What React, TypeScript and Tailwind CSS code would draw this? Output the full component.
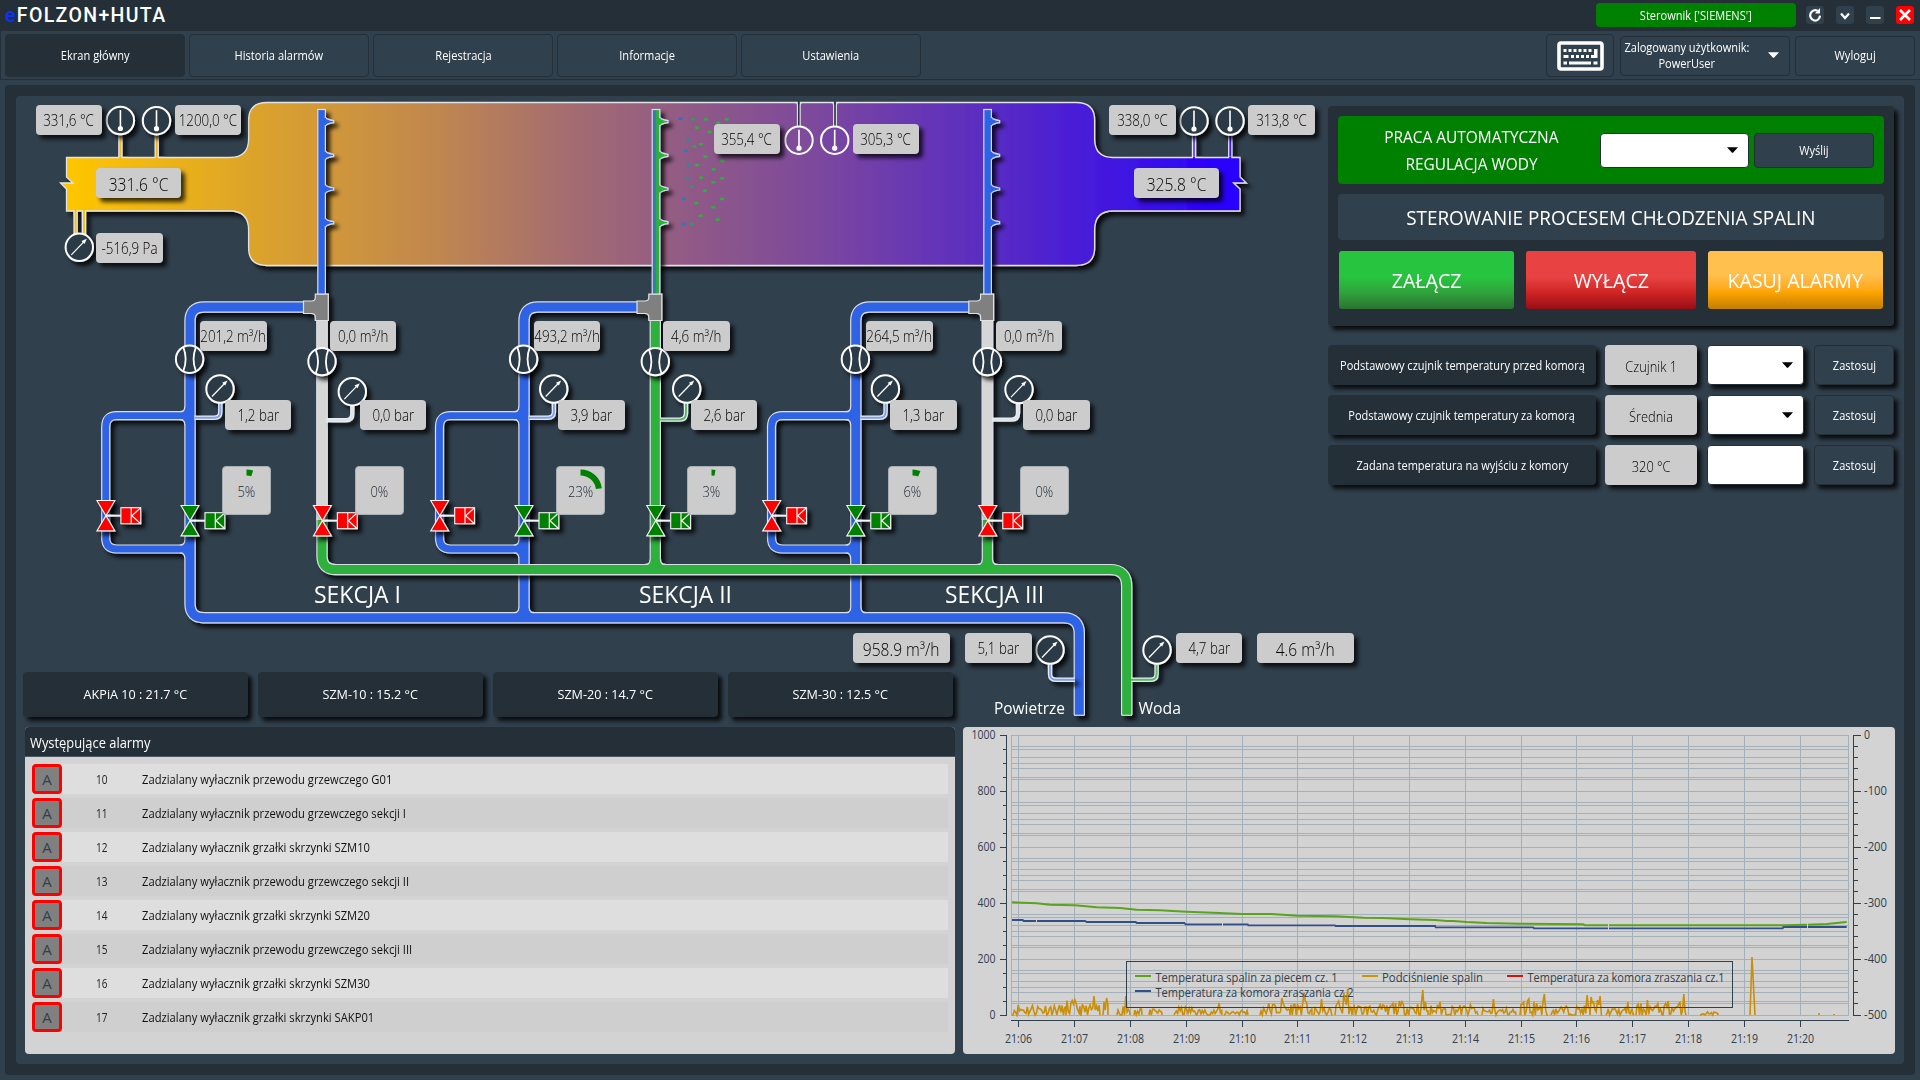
import React from "react";

const BLUE = "#2f64e6";
const GREEN = "#2db03d";
const GRAY = "#d6d6d6";

type Pt = [number, number];

/* ---------- small building blocks ---------- */

function T({ children, className = "" }: { children: React.ReactNode; className?: string }) {
  return <span className={"inline-block whitespace-nowrap " + className}>{children}</span>;
}

function Caret({ className = "" }: { className?: string }) {
  return (
    <svg width="11" height="6" viewBox="0 0 11 6" className={className}>
      <path d="M0 0.3H11L6 5.8H5Z" fill="currentColor" />
    </svg>
  );
}

function NavButton({ label, active }: { label: string; active?: boolean }) {
  return (
    <button
      className={
        "flex h-[43px] w-[180px] items-center justify-center rounded border border-[#242f38] pt-px text-[12px] text-white " +
        (active ? "bg-[#242f38]" : "")
      }
    >
      <T className="scale-x-[.925]">{label}</T>
    </button>
  );
}

/* ---------- process diagram ---------- */

type PillData = { x: number; y: number; w: number; t: string; big?: boolean };

const pills: PillData[] = [
  { x: 36, y: 105, w: 66, t: "331,6 °C" },
  { x: 175, y: 105, w: 66, t: "1200,0 °C" },
  { x: 96, y: 168, w: 85, t: "331.6 °C", big: true },
  { x: 96, y: 233, w: 67, t: "-516,9 Pa" },
  { x: 200, y: 321, w: 67, t: "201,2 m³/h" },
  { x: 330, y: 321, w: 66, t: "0,0 m³/h" },
  { x: 714, y: 124, w: 66, t: "355,4 °C" },
  { x: 853, y: 124, w: 66, t: "305,3 °C" },
  { x: 1109, y: 105, w: 67, t: "338,0 °C" },
  { x: 1248, y: 105, w: 67, t: "313,8 °C" },
  { x: 1134, y: 168, w: 85, t: "325.8 °C", big: true },
  { x: 534, y: 321, w: 66, t: "493,2 m³/h" },
  { x: 663, y: 321, w: 67, t: "4,6 m³/h" },
  { x: 866, y: 321, w: 67, t: "264,5 m³/h" },
  { x: 996, y: 321, w: 66, t: "0,0 m³/h" },
  { x: 225, y: 400, w: 66, t: "1,2 bar" },
  { x: 360, y: 400, w: 66, t: "0,0 bar" },
  { x: 558, y: 400, w: 67, t: "3,9 bar" },
  { x: 691, y: 400, w: 66, t: "2,6 bar" },
  { x: 890, y: 400, w: 67, t: "1,3 bar" },
  { x: 1023, y: 400, w: 67, t: "0,0 bar" },
  { x: 853, y: 633, w: 97, t: "958.9 m³/h", big: true },
  { x: 965, y: 633, w: 67, t: "5,1 bar" },
  { x: 1176, y: 633, w: 66, t: "4,7 bar" },
  { x: 1257, y: 633, w: 97, t: "4.6 m³/h", big: true },
];

const dials = [
  { x: 222, v: 5 },
  { x: 355, v: 0 },
  { x: 556, v: 23 },
  { x: 687, v: 3 },
  { x: 888, v: 6 },
  { x: 1020, v: 0 },
];

function Pill({ x, y, w, t, big }: PillData) {
  return (
    <div
      className="absolute flex h-[30px] items-center justify-center overflow-hidden rounded bg-[#cccccc] pt-[2px] shadow-[4px_4px_4px_rgba(0,0,0,0.75)]"
      style={{ left: x - 16, top: y - 96, width: w }}
    >
      <T
        className={
          big
            ? "scale-x-[.89] text-[17.5px] font-[350] text-black"
            : "scale-x-[.86] text-[15.5px] font-[350] text-black"
        }
      >
        {t}
      </T>
    </div>
  );
}

function Dial({ x, v }: { x: number; v: number }) {
  const a = (v / 100) * Math.PI * 2;
  const r = 18.5;
  return (
    <div
      className="absolute flex h-[49px] w-[49px] items-center justify-center rounded border border-[#a9b0b5] bg-[#cccccc] pt-px"
      style={{ left: x - 16, top: 466 - 96 }}
    >
      <svg className="absolute inset-0" width="47" height="47" viewBox="0 0 47 47">
        {v > 0 && (
          <path
            d={`M23.5 ${24 - r}A${r} ${r} 0 0 1 ${23.5 + r * Math.sin(a)} ${24 - r * Math.cos(a)}`}
            stroke="#008000"
            strokeWidth="6"
            fill="none"
          />
        )}
      </svg>
      <T className="relative scale-x-[.86] text-[15px] font-[350] text-[#1d2a36]">{v}%</T>
    </div>
  );
}

function Pipe({ d, c, w = 9 }: { d: string; c: string; w?: number }) {
  return <path d={d} stroke={c} strokeWidth={w} fill="none" />;
}

type PipeDef = { d: string; c: string; w: number };

function PipeSet({ list }: { list: PipeDef[] }) {
  return (
    <>
      {list.map((p, i) => (
        <Pipe key={"o" + i} d={p.d} c="#d9dde6" w={p.w + 2.4} />
      ))}
      {list.map((p, i) => (
        <Pipe key={"i" + i} d={p.d} c={p.c} w={p.w} />
      ))}
    </>
  );
}

function Stem({ d, c }: { d: string; c: string }) {
  return (
    <g fill="none">
      <path d={d} stroke="#e8ecf4" strokeWidth="4.4" />
      <path d={d} stroke={c} strokeWidth="1.9" />
    </g>
  );
}

function Ring({ x, y, fill = "#2c3a46" }: { x: number; y: number; fill?: string }) {
  return <circle cx={x} cy={y} r="13.7" fill={fill} stroke="#fff" strokeWidth="2" />;
}

function Thermo({ x, y, fill }: { x: number; y: number; fill?: string }) {
  return (
    <g>
      <Ring x={x} y={y} fill={fill} />
      <path d={`M${x} ${y - 10.5}V${y + 8}`} stroke="#fff" strokeWidth="1.6" />
      <circle cx={x} cy={y + 8} r="2.6" fill="#fff" />
    </g>
  );
}

function Gauge({ x, y }: { x: number; y: number }) {
  return (
    <g>
      <Ring x={x} y={y} />
      <path d={`M${x - 8} ${y + 7.5}L${x + 5} ${y - 6}`} stroke="#fff" strokeWidth="1.2" />
      <path d={`M${x + 7.5} ${y - 8.5}L${x + 5.2} ${y - 3.4}L${x + 2.2} ${y - 6.2}Z`} fill="#fff" />
    </g>
  );
}

function Flow({ x, y }: { x: number; y: number }) {
  return (
    <g>
      <Ring x={x} y={y} />
      <path
        d={`M${x - 6.3} ${y - 12}Q${x - 1.6} ${y} ${x - 6.3} ${y + 12}M${x + 6.3} ${y - 12}Q${x + 1.6} ${y} ${x + 6.3} ${y + 12}`}
        stroke="#fff"
        strokeWidth="1.8"
        fill="none"
      />
    </g>
  );
}

function Valve({ x, y, c }: { x: number; y: number; c: string }) {
  return (
    <g transform={`translate(${x} ${y})`} stroke="#f4f4f4">
      <path d="M0 0H15" strokeWidth="2" />
      <path d="M-9 -15.2H9L0 0ZM-9 15.2H9L0 0Z" fill={c} strokeWidth="1.1" />
      <rect x="15" y="-8" width="19.8" height="16" fill={c} strokeWidth="1.1" />
      <path d="M25.3 -8V8M34.8 -8L26 0L34.8 8" fill="none" strokeWidth="1.2" />
    </g>
  );
}

function Tee({ x }: { x: number }) {
  return (
    <path
      transform={`translate(${x} 0)`}
      d="M0 294.2H13V320.5H0V317Q0 313.5 -4 313.5H-11.8V301H-4Q0 301 0 297.5Z"
      fill="#808080"
      stroke="#e2e2e2"
      strokeWidth="1.2"
    />
  );
}

function Lance({ x, fill, tip }: { x: number; fill: string; tip: string }) {
  return (
    <g>
      <rect x={x - 3.8} y="109.5" width="7.6" height="185" fill={fill} stroke="#d5dcf0" strokeWidth="1.2" />
      {[121.6, 155.3, 189, 222.7].map((y) => (
        <g key={y}>
          <path d={`M${x + 3.8} ${y - 4.2}Q${x + 5} ${y - 2} ${x + 12} ${y - 1}V${y + 1}Q${x + 5} ${y + 2} ${x + 3.8} ${y + 4.2}`} fill={tip} stroke="#d5dcf0" strokeWidth="1.2" />
          <rect x={x + 2} y={y - 3.4} width="2.6" height="6.8" fill={tip} />
        </g>
      ))}
    </g>
  );
}

const drops: [number, number, string][] = [
  [722, 86, "#2f6fd0"], [759, 88, "#2d9a68"], [797, 88, GREEN], [860, 88, GREEN], [835, 99, GREEN],
  [771, 113, GREEN], [809, 126, GREEN], [745, 150, "#2d86a0"], [783, 163, GREEN], [763, 170, "#2da258"],
  [737, 183, "#2f7cb4"], [796, 200, GREEN], [847, 213, GREEN], [746, 225, "#2d8a90"], [771, 225, GREEN],
  [821, 238, GREEN], [783, 263, GREEN], [743, 265, "#2d8a98"], [846, 265, GREEN], [820, 277, GREEN],
  [756, 290, "#2d9a68"], [795, 302, GREEN], [731, 327, "#2f78c0"], [846, 327, GREEN], [769, 340, GREEN],
  [820, 352, GREEN], [782, 377, GREEN], [833, 389, GREEN], [731, 402, "#2f78c0"], [756, 402, "#2d9a68"],
];

const sections = [
  { air: 190, by: 105.7, water: 322, tee: 315.3, lance: 321.6, on: false },
  { air: 524, by: 439.5, water: 655.3, tee: 648.8, lance: 656, on: true },
  { air: 855.8, by: 771.5, water: 987.4, tee: 980.6, lance: 987.6, on: false },
];

const airPipes: PipeDef[] = [
  ...sections.flatMap((s, i) => [
    {
      d: `M${s.tee - 11} 307H${s.air + 14}Q${s.air} 307 ${s.air} 321V${i === 0 ? "603.7Q190 617.7 204 617.7" : "617"}`,
      c: BLUE,
      w: 9,
    },
    {
      d: `M${s.air} 415.7H${s.by + 11}Q${s.by} 415.7 ${s.by} 426.7V538Q${s.by} 549 ${s.by + 11} 549H${s.air}`,
      c: BLUE,
      w: 6.8,
    },
  ]),
  { d: "M203 617.7H1063.3Q1079.3 617.7 1079.3 633.7V715", c: BLUE, w: 9 },
];

const waterPipes: PipeDef[] = [
  { d: "M322 520V556Q322 569.6 336 569.6H1110Q1126.7 569.6 1126.7 586V715", c: GREEN, w: 9 },
  { d: "M655.3 318V569", c: GREEN, w: 9 },
  { d: "M987.4 520V569", c: GREEN, w: 9 },
];

const dryPipes: PipeDef[] = [
  { d: "M322 318V520", c: GRAY, w: 9.4 },
  { d: "M987.4 318V520", c: GRAY, w: 9.4 },
];

/* Rounded inner corner where two pipes meet; sx, sy give the quadrant. */
function Fillet({ x, y, sx, sy, c }: { x: number; y: number; sx: number; sy: number; c: string }) {
  return (
    <g transform={`translate(${x} ${y}) scale(${sx} ${sy})`}>
      <path d="M-2 -2H5Q0 0 0 5H-2Z" fill={c} />
      <path d="M5 0Q0 0 0 5" fill="none" stroke="#d9dde6" strokeWidth="1.2" transform="translate(.2 .2)" />
    </g>
  );
}

function Diagram() {
  return (
    <svg
      className="pointer-events-none absolute top-0 left-0 overflow-visible"
      width="1304"
      height="630"
      viewBox="16 96 1304 630"
    >
      <defs>
        <linearGradient id="heat" gradientUnits="userSpaceOnUse" x1="66" x2="1240" y1="0" y2="0">
          <stop offset="0" stopColor="#ffc600" />
          <stop offset="0.155" stopColor="#dda42a" />
          <stop offset="0.32" stopColor="#bf8650" />
          <stop offset="0.42" stopColor="#a66e6e" />
          <stop offset="0.5" stopColor="#965f80" />
          <stop offset="0.62" stopColor="#804c98" />
          <stop offset="0.71" stopColor="#6b3ab0" />
          <stop offset="0.8" stopColor="#5629c6" />
          <stop offset="0.9" stopColor="#4015e2" />
          <stop offset="0.98" stopColor="#2a00ff" />
        </linearGradient>
        <linearGradient id="mix" x1="0" x2="1" y1="0" y2="0">
          <stop offset="0" stopColor="#3f6fc4" />
          <stop offset="0.42" stopColor="#3a7f98" />
          <stop offset="0.6" stopColor={GREEN} />
          <stop offset="1" stopColor={GREEN} />
        </linearGradient>
        <filter id="sh" x="-20%" y="-20%" width="140%" height="140%">
          <feDropShadow dx="4" dy="4" stdDeviation="2" floodColor="#000" floodOpacity="0.8" />
        </filter>
      </defs>

      <g filter="url(#sh)">
        <Stem d="M120.4 134V159" c="#f5b912" />
        <Stem d="M156.7 134V159" c="#f0b418" />
        <Stem d="M75.6 209V236" c="#fcc006" />
        <Stem d="M84 209V236" c="#fcc006" />
        <Stem d="M1194 134V159" c="#6a48ff" />
        <Stem d="M1230.3 134V159" c="#3a12ff" />
        <path
          d="M66.5 157.5H230Q248.6 157.5 248.6 139V120Q248.6 102.5 267 102.5H1076Q1094.6 102.5 1094.6 120V139Q1094.6 157.5 1113 157.5H1240V177L1246.4 183H1233.5L1240 189V211H1113Q1094.6 211 1094.6 230V248Q1094.6 265.5 1076 265.5H267Q248.6 265.5 248.6 248V230Q248.6 211 230 211H66.5V189L60.5 183H73L66.5 177Z"
          fill="url(#heat)"
          stroke="#e3e3e3"
          strokeWidth="1.3"
        />
        <path d="M119.3 158H121.5M155.6 158H157.8" stroke="#f3b715" strokeWidth="2" />
        <path d="M74.7 211H76.5M83.1 211H84.9" stroke="#fcc006" strokeWidth="2" />
        <path d="M1193 158H1195M1229.3 158H1231.3" stroke="#3608f2" strokeWidth="2" />
      </g>

      {[798.8, 835].map((x) => (
        <g key={x} fill="none">
          <path d={`M${x} 101V127`} stroke="#2a3742" strokeWidth="1.8" />
          <path d={`M${x - 4} 102.5Q${x - 1.4} 102.5 ${x - 1.4} 105V127M${x + 4} 102.5Q${x + 1.4} 102.5 ${x + 1.4} 105V127`} stroke="#e3e3e3" strokeWidth="1.1" />
        </g>
      ))}

      {drops.map(([x, y, c], i) => (
        <ellipse key={i} cx={440 + x / 3} cy={90 + y / 3} rx="2.3" ry="1.4" fill={c} />
      ))}

      <g filter="url(#sh)">
        <PipeSet list={airPipes} />
        {sections.map((s) => (
          <g key={s.air}>
            <Fillet x={s.air - 5} y={411.9} sx={-1} sy={-1} c={BLUE} />
            <Fillet x={s.air - 5} y={419.5} sx={-1} sy={1} c={BLUE} />
            <Fillet x={s.air - 5} y={545.2} sx={-1} sy={-1} c={BLUE} />
            <Fillet x={s.air - 5} y={552.8} sx={-1} sy={1} c={BLUE} />
          </g>
        ))}
        {sections.slice(1).map((s) => (
          <g key={s.air}>
            <Fillet x={s.air - 5} y={612.8} sx={-1} sy={-1} c={BLUE} />
            <Fillet x={s.air + 5} y={612.8} sx={1} sy={-1} c={BLUE} />
          </g>
        ))}
        <path d="M1074 715.3H1084.6" stroke="#dcdcdc" strokeWidth="1.2" />
      </g>

      <g filter="url(#sh)">
        {sections.map((s, i) => (
          <Lance key={s.lance} x={s.lance} fill={i === 1 ? "url(#mix)" : BLUE} tip={i === 1 ? GREEN : BLUE} />
        ))}
        <PipeSet list={dryPipes} />
        <PipeSet list={waterPipes} />
        {[655.3, 987.4].map((x) => (
          <g key={x}>
            <Fillet x={x - 5} y={564.6} sx={-1} sy={-1} c={GREEN} />
            <Fillet x={x + 5} y={564.6} sx={1} sy={-1} c={GREEN} />
          </g>
        ))}
        <path d="M1121.4 715.3H1132" stroke="#dcdcdc" strokeWidth="1.2" />
        {sections.map((s) => (
          <Tee key={s.tee} x={s.tee} />
        ))}
      </g>

      <g filter="url(#sh)">
        <Stem d="M220.3 402V412Q220.3 417.8 214 417.8H194.5" c="#7f9ff2" />
        <Stem d="M553.9 402V412Q553.9 417.8 547.5 417.8H528.5" c="#7f9ff2" />
        <Stem d="M885.6 402V412Q885.6 417.8 879.3 417.8H860.3" c="#7f9ff2" />
        <Stem d="M352.3 404V414Q352.3 420.3 346 420.3H326.5" c="#e2e2e2" />
        <Stem d="M686 402V413Q686 419.6 679.6 419.6H660" c="#58b864" />
        <Stem d="M1018 402V413Q1018 419.6 1011.7 419.6H992" c="#e2e2e2" />
        <Stem d="M1050 663V674Q1050 679.8 1056 679.8H1075" c="#7f9ff2" />
        <Stem d="M1156.6 663V674Q1156.6 679.8 1150.6 679.8H1131" c="#58b864" />

        {sections.map((s) => (
          <g key={s.air}>
            <Flow x={s.air - 0.4} y={359.2} />
            <Flow x={s.water} y={361.6} />
            <Valve x={s.by + 0.2} y={515.7} c="#ff0000" />
            <Valve x={s.air} y={520.7} c="#008000" />
            <Valve x={s.water + 0.4} y={520.7} c={s.on ? "#008000" : "#ff0000"} />
          </g>
        ))}
        <Thermo x={120.4} y={120.5} />
        <Thermo x={156.5} y={120.7} />
        <Thermo x={1194} y={121} />
        <Thermo x={1230} y={121} />
        <Gauge x={79.3} y={247.3} />
        <Gauge x={220} y={389} />
        <Gauge x={352.3} y={391.7} />
        <Gauge x={553.7} y={389} />
        <Gauge x={686.7} y={389} />
        <Gauge x={885.4} y={389} />
        <Gauge x={1019} y={389.6} />
        <Gauge x={1050} y={650} />
        <Gauge x={1157} y={650} />
      </g>
      <Thermo x={799} y={140.2} fill="#7f4c9a" />
      <Thermo x={834.7} y={140.2} fill="#7644a2" />

      <g fill="#fff" fontSize="23.5">
        <text x="314" y="603" textLength="87" lengthAdjust="spacingAndGlyphs">SEKCJA I</text>
        <text x="639" y="603" textLength="93" lengthAdjust="spacingAndGlyphs">SEKCJA II</text>
        <text x="945" y="603" textLength="99" lengthAdjust="spacingAndGlyphs">SEKCJA III</text>
      </g>
      <g fill="#fff" fontSize="16.5">
        <text x="994" y="714" textLength="71" lengthAdjust="spacingAndGlyphs">Powietrze</text>
        <text x="1138.5" y="714" textLength="42.5" lengthAdjust="spacingAndGlyphs">Woda</text>
      </g>
    </svg>
  );
}

/* ---------- trend chart ---------- */

const L = (pts: Pt[], ox: number): Pt[] => pts.map(([x, y]) => [ox + x / 3, 715 + y / 3]);
const toPath = (pts: Pt[]) => "M" + pts.map(([x, y]) => `${x.toFixed(1)} ${y.toFixed(1)}`).join("L");

const greenLine = toPath([
  ...L([[186, 562], [260, 565], [300, 569], [375, 571], [440, 577], [510, 579], [560, 584], [630, 586], [709, 590], [790, 593], [877, 597], [965, 597], [1042, 602], [1155, 604], [1240, 608], [1300, 609], [1380, 613], [1455, 615], [1490, 618]], 950),
  ...L([[100, 618], [140, 621], [200, 624], [300, 626], [490, 628], [495, 631], [1090, 631], [1160, 629], [1220, 627], [1280, 621]], 1420),
]);
const blueLine = toPath([
  ...L([[186, 615], [218, 615], [221, 618], [405, 618], [410, 621], [557, 621], [560, 624], [703, 624], [707, 628], [893, 628], [895, 631], [1155, 631], [1157, 633], [1455, 633]], 950),
  ...L([[45, 634], [47, 637], [340, 637], [342, 640], [1088, 640], [1090, 636], [1280, 636]], 1420),
]);

/* Draught bursts: x range and typical height above the zero line. */
const bursts: { from: number; to: number; h: number }[] = [
  { from: 1012, to: 1052, h: 10 }, { from: 1052, to: 1066, h: 9 }, { from: 1066, to: 1080, h: 13 },
  { from: 1080, to: 1100, h: 9 }, { from: 1103, to: 1108, h: 11 }, { from: 1117, to: 1130, h: 9 },
  { from: 1134, to: 1142, h: 10 }, { from: 1149, to: 1162, h: 5 }, { from: 1174, to: 1196, h: 7 },
  { from: 1196, to: 1222, h: 5 }, { from: 1224, to: 1248, h: 5 }, { from: 1260, to: 1290, h: 11 },
  { from: 1290, to: 1312, h: 12 }, { from: 1314, to: 1332, h: 6 }, { from: 1335, to: 1352, h: 14 },
  { from: 1352, to: 1388, h: 9 }, { from: 1388, to: 1428, h: 12 }, { from: 1430, to: 1446, h: 9 },
  { from: 1446, to: 1478, h: 9 }, { from: 1482, to: 1516, h: 6 }, { from: 1520, to: 1548, h: 13 },
  { from: 1551, to: 1590, h: 8 }, { from: 1590, to: 1602, h: 14 }, { from: 1606, to: 1634, h: 6 },
  { from: 1636, to: 1662, h: 10 }, { from: 1662, to: 1686, h: 11 }, { from: 1700, to: 1718, h: 3 },
];
const peaks: Record<number, number> = {
  1094: 19, 1107: 17, 1126: 19, 1219: 12, 1282: 17, 1304: 22, 1322: 16, 1344: 22, 1348: 26, 1423: 25, 1440: 13,
  1493: 16, 1529: 16, 1544: 21, 1587: 20, 1591: 18, 1600: 19, 1628: 13, 1647: 15, 1668: 14, 1684: 21,
};

function draught(): string {
  let seed = 11;
  const rnd = () => {
    seed = (seed * 16807) % 2147483647;
    return seed / 2147483647;
  };
  let d = "";
  for (const b of bursts) {
    d += `M${b.from} 1015`;
    for (let x = b.from + 1; x < b.to; x += 1.3) {
      const near = Object.keys(peaks).find((k) => Math.abs(Number(k) - x) < 0.7);
      const h = near ? peaks[Number(near)] : Math.max(0, b.h * (rnd() * 1.3 - 0.12));
      d += `L${x.toFixed(1)} ${(1015 - h).toFixed(1)}`;
    }
    d += `L${b.to} 1015`;
  }
  d += "M1750 1015L1752 957L1755 1015M1819 1015V1013M1834 1015V1014";
  return d;
}

const vGrid = [1018.5, 1074.5, 1130.5, 1186.5, 1242.5, 1297.5, 1353.5, 1409.5, 1465.5, 1521.5, 1576.5, 1632.5, 1688.5, 1744.5, 1800.5];
const minorL = [14, 28, 42];
const minorR = [11, 22, 33, 44];

function Chart() {
  const rows = [0, 1, 2, 3, 4];
  return (
    <div className="h-[327px] w-[932px] rounded bg-[#d3d3d3]">
      <svg width="932" height="327" viewBox="963 727 932 327" className="block">
        <g stroke="#a5b1ba" strokeWidth="1" fill="none" shapeRendering="crispEdges">
          <rect x="1011.5" y="735.5" width="837" height="280" />
          {vGrid.map((x) => (
            <path key={x} d={`M${x} 735V1015`} />
          ))}
          {rows.map((r) => (
            <g key={r}>
              <path d={`M1012 ${735.5 + r * 56}H1848`} />
              {[...minorL, ...minorR].map((m) => (
                <path key={m} d={`M1012 ${735.5 + r * 56 + m}H1848`} />
              ))}
            </g>
          ))}
        </g>
        <g stroke="#31404d" strokeWidth="1" fill="none" shapeRendering="crispEdges">
          <path d="M1000 735.5H1006.5V1015.5H1000M1861 735.5H1853.5V1015.5H1861M1011 1020.5H1849" />
          {rows.map((r) => (
            <g key={r}>
              <path d={`M1000 ${735.5 + r * 56}H1006M1854 ${735.5 + r * 56}H1861`} />
              {minorL.map((m) => (
                <path key={m} d={`M1003 ${735.5 + r * 56 + m}H1006`} />
              ))}
              {minorR.map((m) => (
                <path key={m} d={`M1854 ${735.5 + r * 56 + m}H1858`} />
              ))}
            </g>
          ))}
          {vGrid.map((x) => (
            <path key={x} d={`M${x} 1020V1027`} />
          ))}
        </g>
        <path d={draught()} stroke="#c98f08" strokeWidth="1.6" fill="none" />
        <path d={blueLine} stroke="#30508c" strokeWidth="1.8" fill="none" />
        <path d={greenLine} stroke="#5ba31c" strokeWidth="2" fill="none" />
        <path d="M1036.5 920V922.5M1222.5 922V926M1608.5 922V930M1807.5 922V930" stroke="#d3d3d3" />
        <rect x="1126.5" y="961.5" width="606" height="46" fill="none" stroke="#31404d" shapeRendering="crispEdges" />
        <g strokeWidth="2" shapeRendering="crispEdges">
          <path d="M1135 976H1151" stroke="#5ba31c" />
          <path d="M1362 976H1378" stroke="#c99412" />
          <path d="M1507 976H1523" stroke="#cc1515" />
          <path d="M1135 991H1151" stroke="#30508c" />
        </g>
        <g fill="#31404d" fontSize="12">
          <text x="1155.5" y="981.5" textLength="182" lengthAdjust="spacingAndGlyphs">Temperatura spalin za piecem cz. 1</text>
          <text x="1382" y="981.5" textLength="101" lengthAdjust="spacingAndGlyphs">Podciśnienie spalin</text>
          <text x="1527.5" y="981.5" textLength="197" lengthAdjust="spacingAndGlyphs">Temperatura za komora zraszania cz.1</text>
          <text x="1155.5" y="996.5" textLength="198" lengthAdjust="spacingAndGlyphs">Temperatura za komora zraszania cz.2</text>
          {["1000", "800", "600", "400", "200", "0"].map((t, i) => (
            <text key={t} x="995.5" y={739 + i * 56} textAnchor="end" textLength={t.length * 6} lengthAdjust="spacingAndGlyphs">
              {t}
            </text>
          ))}
          {["0", "-100", "-200", "-300", "-400", "-500"].map((t, i) => (
            <text key={t} x="1864" y={739 + i * 56} textLength={i ? 23 : 6} lengthAdjust="spacingAndGlyphs">
              {t}
            </text>
          ))}
          {vGrid.map((x, i) => (
            <text key={x} x={x} y="1043" textAnchor="middle" textLength="27" lengthAdjust="spacingAndGlyphs">
              {`21:${String(6 + i).padStart(2, "0")}`}
            </text>
          ))}
        </g>
      </svg>
    </div>
  );
}

/* ---------- alarm list ---------- */

const alarms: [number, string][] = [
  [10, "Zadzialany wyłacznik przewodu grzewczego G01"],
  [11, "Zadzialany wyłacznik przewodu grzewczego sekcji I"],
  [12, "Zadzialany wyłacznik grzałki skrzynki SZM10"],
  [13, "Zadzialany wyłacznik przewodu grzewczego sekcji II"],
  [14, "Zadzialany wyłacznik grzałki skrzynki SZM20"],
  [15, "Zadzialany wyłacznik przewodu grzewczego sekcji III"],
  [16, "Zadzialany wyłacznik grzałki skrzynki SZM30"],
  [17, "Zadzialany wyłacznik grzałki skrzynki SAKP01"],
];

function Alarms() {
  return (
    <div className="flex h-[327px] w-[930px] flex-col overflow-hidden rounded bg-[#d3d3d3]">
      <div className="flex h-[30px] items-center border-b border-[#4a5863] bg-[#242f38] pt-[2px] pl-[5px] text-[14px] text-white">
        <T className="origin-left scale-x-[.92]">Występujące alarmy</T>
      </div>
      <div className="flex flex-col gap-1 pt-[7px] pr-[7px] pl-[7px]">
        {alarms.map(([n, t], i) => (
          <div key={n} className={"flex h-[30px] items-center " + (i % 2 ? "bg-[#cfcfcf]" : "bg-[#dedede]")}>
            <div className="flex h-[30px] w-[30px] items-center justify-center rounded border-[3px] border-[#ff0000] bg-[#808080] pt-px text-[15px] text-[#31404d]">
              A
            </div>
            <div className="ml-[20px] w-[40px] pt-px text-center text-[12px] text-[#222]">
              <T className="scale-x-[.84]">{n}</T>
            </div>
            <div className="ml-[20px] pt-px text-[12px] text-[#111]">
              <T className="origin-left scale-x-[.934]">{t}</T>
            </div>
          </div>
        ))}
      </div>
    </div>
  );
}

/* ---------- control panel ---------- */

const settings = [
  { label: "Podstawowy czujnik temperatury przed komorą", value: "Czujnik 1", combo: true },
  { label: "Podstawowy czujnik temperatury za komorą", value: "Średnia", combo: true },
  { label: "Zadana temperatura na wyjściu z komory", value: "320 °C", combo: false },
];

function Controls() {
  return (
    <div className="flex w-[566px] flex-col pt-[10px]">
      <section className="h-[220px] rounded bg-[#242f38] px-[10px] pt-[10px] shadow-[4px_4px_4px_rgba(0,0,0,0.8)]">
        <div className="flex h-[68px] items-center rounded bg-[#008000]">
          <div className="flex w-[262px] shrink-0 flex-col items-center pt-[2px] pl-[4px] text-[16px] leading-[27px] text-white">
            <T className="scale-x-[.965]">PRACA AUTOMATYCZNA</T>
            <T className="scale-x-[.965]">REGULACJA WODY</T>
          </div>
          <div className="flex h-[35px] w-[149px] items-center justify-end rounded border border-[#242f38] bg-white pr-[10px] pb-px text-black">
            <Caret />
          </div>
          <button className="ml-[5px] flex h-[35px] w-[120px] items-center justify-center rounded border border-[#242f38] bg-[#31404d] pt-0.5 text-[12px] text-white">
            <T className="scale-x-[.92]">Wyślij</T>
          </button>
        </div>
        <div className="mt-[10px] flex h-[46px] items-center justify-center rounded bg-[#31404d] pt-px text-[20px] text-white">
          <T className="scale-x-[.944]">STEROWANIE PROCESEM CHŁODZENIA SPALIN</T>
        </div>
        <div className="mt-[11px] flex h-[58px] gap-3 px-px text-[20px] text-white">
          <button className="flex w-[175px] items-center justify-center rounded-[3px] bg-linear-to-b from-[#27c43f] from-45% via-[#2fa63c] via-70% to-[#2a7330] pt-0.5">
            <T className="scale-x-[.98]">ZAŁĄCZ</T>
          </button>
          <button className="flex w-[170px] items-center justify-center rounded-[3px] bg-linear-to-b from-[#e84242] from-45% via-[#d22525] via-70% to-[#980d15] pt-0.5">
            <T className="scale-x-[.98]">WYŁĄCZ</T>
          </button>
          <button className="flex w-[175px] items-center justify-center rounded-[3px] bg-linear-to-b from-[#ffc04d] from-40% via-[#ffa500] via-70% to-[#c27e00] pt-0.5">
            <T className="scale-x-[.98]">KASUJ ALARMY</T>
          </button>
        </div>
      </section>

      <div className="mt-[19px] flex flex-col gap-[10px]">
        {settings.map((s) => (
          <div key={s.label} className="flex h-10 text-[12px] text-white">
            <div className="flex w-[268px] items-center justify-center rounded bg-[#242f38] pt-0.5 shadow-[4px_4px_4px_rgba(0,0,0,0.8)]">
              <T className="scale-x-[.917]">{s.label}</T>
            </div>
            <div className="ml-[9px] flex w-[92px] items-center justify-center rounded bg-[#cccccc] pt-0.5 text-[14px] font-[350] text-black shadow-[4px_4px_4px_rgba(0,0,0,0.8)]">
              <T className="scale-x-[.92]">{s.value}</T>
            </div>
            <div className="ml-[10px] flex w-[97px] items-center justify-end rounded border border-[#242f38] bg-white pr-[10px] text-black shadow-[4px_4px_4px_rgba(0,0,0,0.8)]">
              {s.combo && <Caret />}
            </div>
            <button className="ml-[10px] flex w-[80px] items-center justify-center rounded border border-[#242f38] bg-[#31404d] pt-0.5 shadow-[4px_4px_4px_rgba(0,0,0,0.8)]">
              <T className="scale-x-[.92]">Zastosuj</T>
            </button>
          </div>
        ))}
      </div>
    </div>
  );
}

/* ---------- top bars ---------- */

function KeyboardIcon() {
  const keys: React.ReactNode[] = [];
  [0, 1, 2, 3, 4, 5].forEach((i) => keys.push(<rect key={"a" + i} x={6.5 + i * 5} y="8" width="3" height="3" />));
  [0, 1, 2, 3, 4].forEach((i) => keys.push(<rect key={"b" + i} x={(i ? 9 : 6.5) + i * 5} y="14" width={i ? 3 : 5} height="3" />));
  return (
    <svg width="47" height="30" viewBox="0 0 47 30" fill="#fff">
      <rect x="2" y="2" width="43" height="26" rx="2" fill="none" stroke="#fff" strokeWidth="3.6" />
      {keys}
      <path d="M37 8H40.5V17H34V14H37Z" />
      <rect x="6.5" y="20.5" width="3.5" height="3" />
      <rect x="12" y="20.5" width="22" height="3" />
      <rect x="36.5" y="20.5" width="4" height="3" />
    </svg>
  );
}

function WindowButton({ children, danger }: { children: React.ReactNode; danger?: boolean }) {
  return (
    <button className={"flex h-[18px] w-[18px] items-center justify-center rounded-[3px] " + (danger ? "bg-[#ff0000]" : "bg-[#31404d]")}>
      <svg width="18" height="18" viewBox="0 0 18 18" fill="none" stroke="#fff" strokeWidth="2.2">
        {children}
      </svg>
    </button>
  );
}

export default function App() {
  return (
    <div className="flex h-[1080px] w-[1920px] flex-col overflow-hidden bg-[#31404d] font-['Open_Sans','Noto_Sans',sans-serif]">
      <header className="flex h-[31px] shrink-0 items-start justify-between bg-[#242f38] pr-[6px] pl-[5px]">
        <div className="pt-[2px] font-['Roboto',sans-serif] text-[19.5px] leading-[28px] font-medium tracking-[1.35px] whitespace-nowrap text-white">
          <span className="text-[#0a32ff]">e</span>FOLZON+HUTA
        </div>
        <div className="flex items-start">
          <div className="mt-[3px] flex h-6 w-[200px] items-center justify-center rounded bg-[#008000] pt-px text-[12px] text-white">
            <T className="scale-x-[.92]">Sterownik ['SIEMENS']</T>
          </div>
          <div className="mt-[6px] ml-[10px] flex gap-3">
            <WindowButton>
              <path d="M11.6 4.9A4.9 5.2 0 1 0 14 9.6" />
              <path d="M9 7.4H14V2Z" fill="#fff" stroke="none" />
            </WindowButton>
            <WindowButton>
              <path d="M5 7.5L9 12L13 7.5" />
            </WindowButton>
            <WindowButton>
              <path d="M4 12H14.5" strokeWidth="2" />
            </WindowButton>
            <WindowButton danger>
              <path d="M4 4L14 14M14 4L4 14" strokeWidth="2.6" />
            </WindowButton>
          </div>
        </div>
      </header>

      <nav className="flex h-[49px] shrink-0 items-start justify-between border-b border-l border-[#242f38] pt-[3px] pr-[5px] pl-1">
        <div className="flex gap-1">
          <NavButton label="Ekran główny" active />
          <NavButton label="Historia alarmów" />
          <NavButton label="Rejestracja" />
          <NavButton label="Informacje" />
          <NavButton label="Ustawienia" />
        </div>
        <div className="flex items-center">
          <div className="flex h-[43px] w-[68px] items-center justify-center rounded border border-[#242f38]">
            <KeyboardIcon />
          </div>
          <div className="ml-[6px] flex h-10 w-[170px] items-center rounded border border-[#242f38] text-[12px] leading-[16px] text-white">
            <div className="flex w-[131px] shrink-0 flex-col items-center pt-px">
              <T className="scale-x-[.92]">Zalogowany użytkownik:</T>
              <T className="scale-x-[.92]">PowerUser</T>
            </div>
            <Caret className="mb-0.5 ml-[16px] text-white" />
          </div>
          <button className="ml-[5px] flex h-10 w-[120px] items-center justify-center rounded border border-[#242f38] pt-px text-[12px] text-white">
            <T className="scale-x-[.93]">Wyloguj</T>
          </button>
        </div>
      </nav>

      <main className="mx-[5px] mt-[5px] h-[990px] rounded bg-[#242f38] p-[11px]">
        <div className="flex h-[968px] flex-col rounded bg-[#31404d]">
          <div className="flex h-[576px] justify-between pr-[10px]">
            <div className="relative w-[1300px]">
              <Diagram />
              {pills.map((p, i) => (
                <Pill key={i} {...p} />
              ))}
              {dials.map((d) => (
                <Dial key={d.x} {...d} />
              ))}
            </div>
            <Controls />
          </div>
          <div className="flex h-[45px] gap-[10px] pl-[7px] text-[13px] text-white">
            {["AKPiA 10 : 21.7 °C", "SZM-10 : 15.2 °C", "SZM-20 : 14.7 °C", "SZM-30 : 12.5 °C"].map((t) => (
              <div key={t} className="flex w-[225px] items-center justify-center rounded bg-[#242f38] pt-px shadow-[4px_4px_4px_rgba(0,0,0,0.8)]">
                <T className="scale-x-[.97]">{t}</T>
              </div>
            ))}
          </div>
          <div className="mt-[10px] flex gap-2 pl-[9px]">
            <Alarms />
            <Chart />
          </div>
        </div>
      </main>
    </div>
  );
}
